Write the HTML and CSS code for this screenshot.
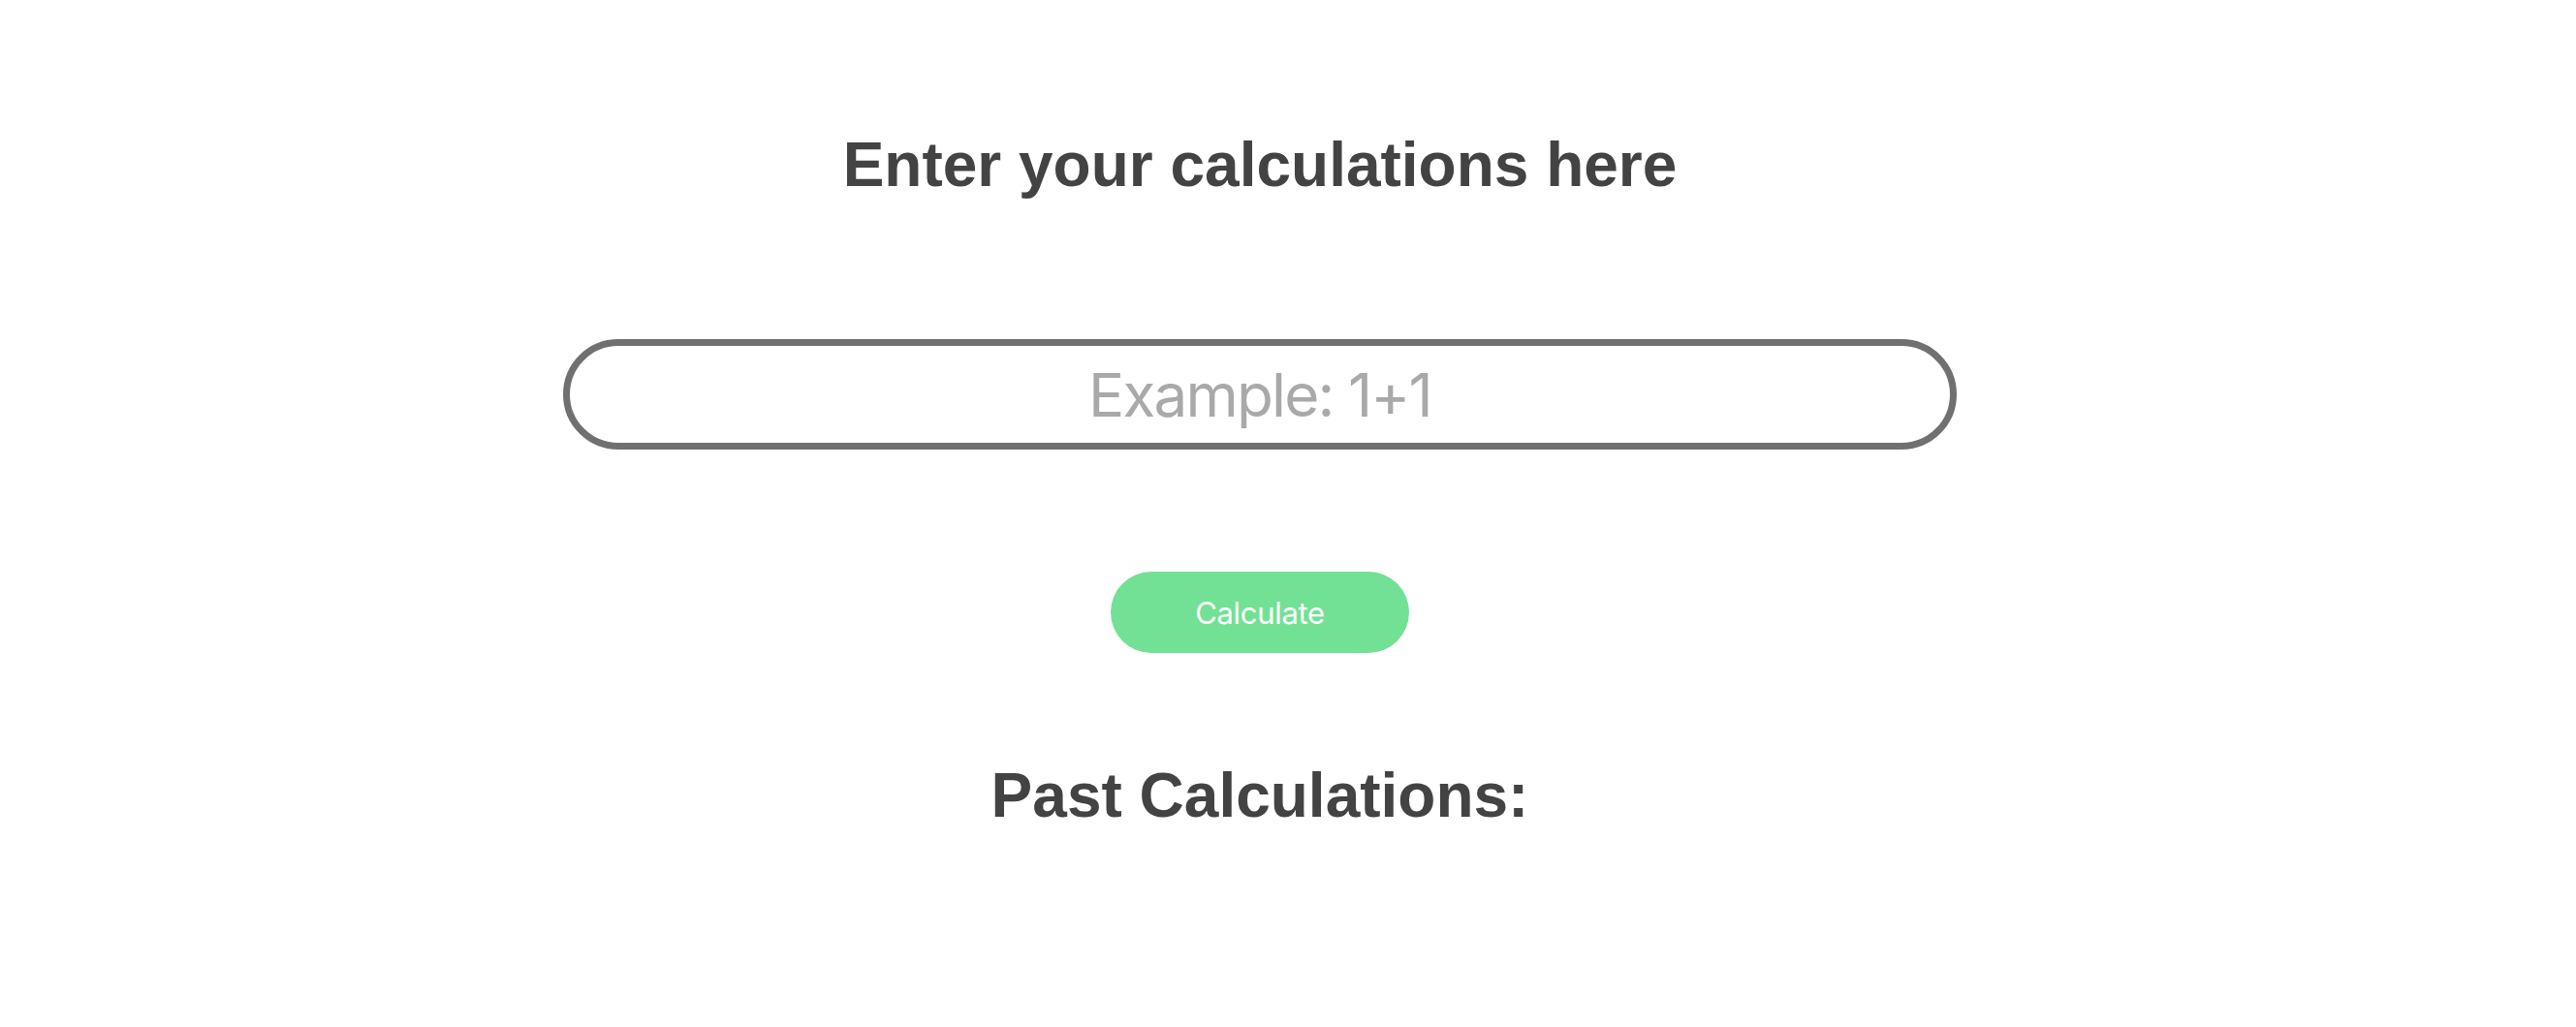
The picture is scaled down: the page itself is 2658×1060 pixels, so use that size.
FILE: index.html
```html
<!DOCTYPE html>
<html lang="en">
<head>
<meta charset="utf-8">
<title>Calculator</title>
<link rel="stylesheet" href="styles.css">
</head>
<body>
<main class="page">
  <h1 class="title">Enter your calculations here</h1>
  <input class="calc-input" type="text" placeholder="Example: 1+1">
  <button class="calc-btn" type="button">Calculate</button>
  <h2 class="title past">Past Calculations:</h2>
  <ul class="history"></ul>
</main>
</body>
</html>
```

FILE: styles.css
```css
html, body {
  margin: 0;
  padding: 0;
  background: #ffffff;
}

.page {
  width: 2600px;
  display: flex;
  flex-direction: column;
  align-items: center;
  padding-top: 133px;
}

.title {
  margin: 0;
  font-family: "Liberation Sans", Arial, sans-serif;
  font-weight: bold;
  font-size: 64px;
  line-height: 74px;
  color: #434343;
}

.calc-input {
  box-sizing: border-box;
  margin-top: 143px;
  width: 1438px;
  height: 114px;
  border: 7px solid #707070;
  border-radius: 57px;
  padding: 0 40px;
  font-family: Inter, "Noto Sans", sans-serif;
  font-size: 62px;
  letter-spacing: -0.03em;
  text-align: center;
  color: #333;
  outline: none;
  background: #fff;
}

.calc-input::placeholder {
  color: #a9a9a9;
  opacity: 1;
}

.calc-btn {
  box-sizing: border-box;
  margin-top: 126px;
  width: 308px;
  height: 84px;
  border: none;
  border-radius: 42px;
  background: #72e195;
  color: #ffffff;
  font-family: Inter, "Noto Sans", sans-serif;
  font-size: 31px;
  letter-spacing: -0.01em;
  padding: 0;
}

.past {
  margin-top: 110px;
}

.history {
  margin: 0;
  padding: 0;
  list-style: none;
}
```
